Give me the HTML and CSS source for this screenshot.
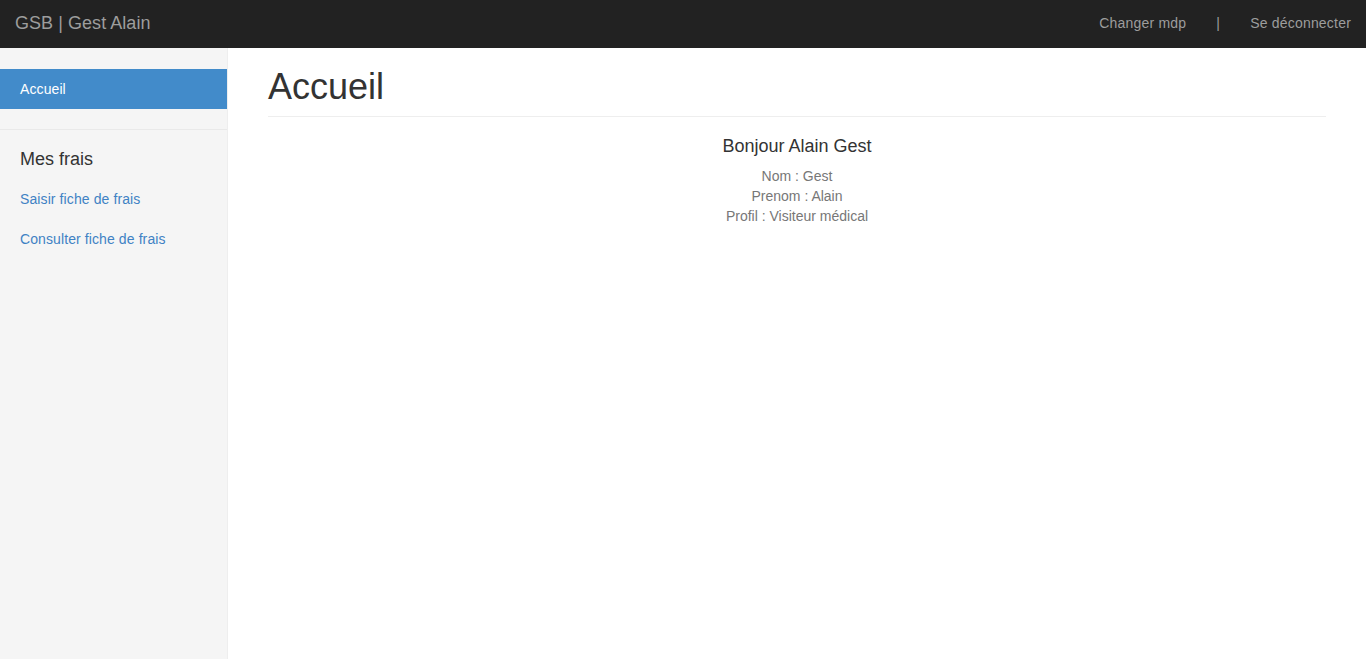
FILE: index.html
```html
<!DOCTYPE html>
<html lang="fr">
<head>
<meta charset="utf-8">
<title>GSB</title>
<link rel="stylesheet" href="styles.css">
</head>
<body>
<header class="navbar">
  <a class="brand" href="#">GSB | Gest Alain</a>
  <ul class="nav-right">
    <li><a href="#">Changer mdp</a></li>
    <li><span>|</span></li>
    <li><a href="#">Se déconnecter</a></li>
  </ul>
</header>
<div class="layout">
  <aside class="sidebar">
    <ul class="side-nav first">
      <li class="active"><a href="#">Accueil</a></li>
    </ul>
    <ul class="side-nav second">
      <li class="nav-header">Mes frais</li>
      <li><a href="#">Saisir fiche de frais</a></li>
      <li><a href="#">Consulter fiche de frais</a></li>
    </ul>
  </aside>
  <main class="main">
    <div class="page-header"><h1>Accueil</h1></div>
    <div class="welcome">
      <h4>Bonjour Alain Gest</h4>
      <p>Nom : Gest</p>
      <p>Prenom : Alain</p>
      <p>Profil : Visiteur médical</p>
    </div>
  </main>
</div>
</body>
</html>
```

FILE: styles.css
```css
* { box-sizing: border-box; }
html, body { height: 100%; }
body {
  margin: 0;
  font-family: "Liberation Sans", Arial, sans-serif;
  font-size: 14px;
  line-height: 20px;
  color: #333;
  background: #fff;
  display: flex;
  flex-direction: column;
}
a { text-decoration: none; }
.navbar {
  height: 48px;
  background: #222;
  display: flex;
  justify-content: space-between;
  align-items: flex-start;
  padding: 0 0 0 15px;
  flex-shrink: 0;
}
.brand {
  font-size: 18px;
  line-height: 20px;
  color: #9d9d9d;
  padding-top: 13px;
  letter-spacing: 0.05px;
}
.nav-right {
  list-style: none;
  margin: 0;
  padding: 0;
  display: flex;
}
.nav-right li a, .nav-right li span {
  display: block;
  padding: 13px 15px;
  color: #9d9d9d;
  letter-spacing: 0.2px;
}
.layout {
  flex: 1;
  display: flex;
  min-height: 0;
}
.sidebar {
  width: 228px;
  flex-shrink: 0;
  background: #f5f5f5;
  border-right: 1px solid #eee;
  padding-top: 21px;
}
.side-nav {
  list-style: none;
  margin: 0;
  padding: 0;
}
.side-nav.first { margin-bottom: 20px; }
.side-nav.second {
  border-top: 1px solid #e9e9e9;
  padding-top: 9px;
}
.side-nav li a {
  display: block;
  padding: 10px 20px;
  color: #3f82c4;
  letter-spacing: 0.1px;
}
.side-nav li.active a {
  background: #428bca;
  color: #fff;
}
.nav-header {
  padding: 10px 20px;
  font-size: 18px;
  color: #333;
}
.main {
  flex: 1;
  padding: 19px 40px 0;
}
.page-header {
  padding-bottom: 9px;
  border-bottom: 1px solid #eee;
  margin-bottom: 20px;
}
.page-header h1 {
  margin: 0;
  font-size: 36px;
  font-weight: 500;
  line-height: 1.1;
}
.welcome { text-align: center; }
.welcome h4 {
  margin: 9px 0 10px;
  font-size: 18px;
  font-weight: 500;
  line-height: 1.1;
  color: #333;
}
.welcome p {
  margin: 0;
  color: #777;
}
```
